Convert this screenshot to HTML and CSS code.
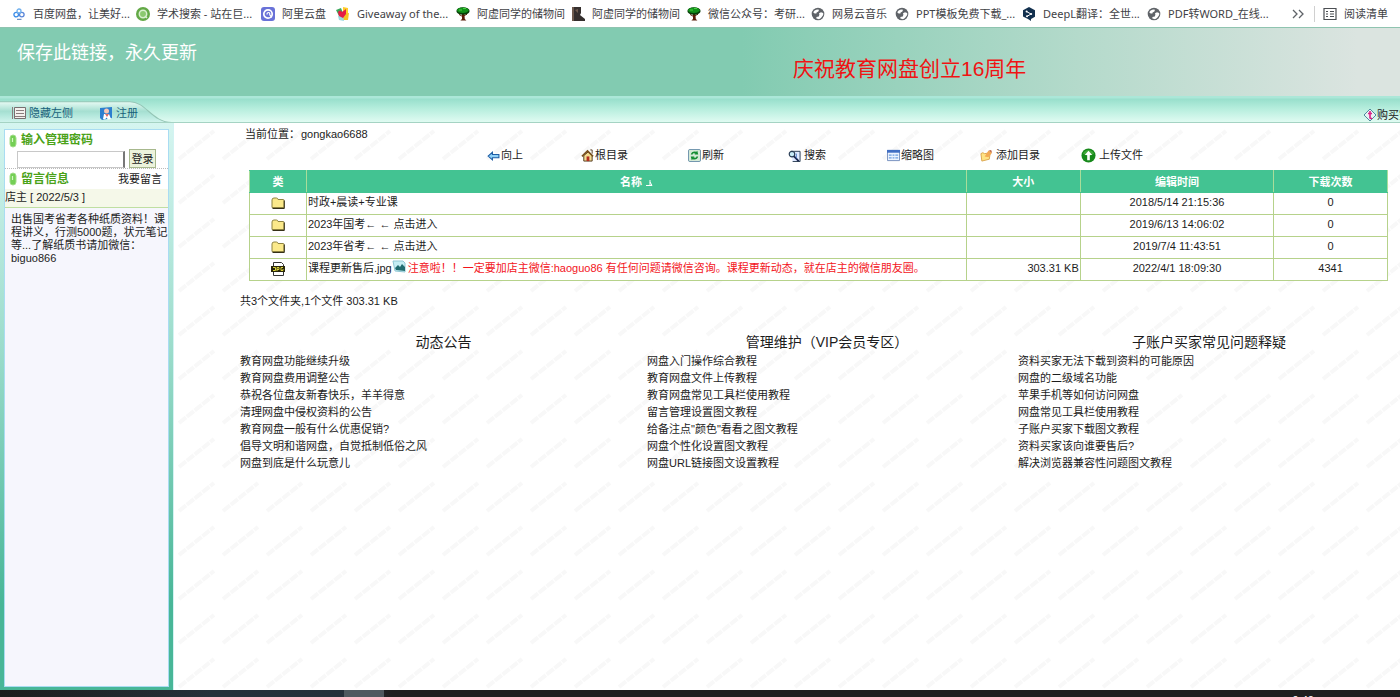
FILE: index.html
```html
<!DOCTYPE html>
<html lang="zh-CN">
<head>
<meta charset="utf-8">
<title>gongkao6688</title>
<link rel="stylesheet" href="styles.css">
</head>
<body>
<svg class="defs" aria-hidden="true">
  <symbol id="globe" viewBox="0 0 14 14"><circle cx="7" cy="7" r="6.3" fill="#5f6368"/><path d="M2.2 5.2 3.6 3.4 6 2.4 8 2.8 7.4 4.6 5.6 5.6 5.4 6.6H3.6zM8 6.2l2-1 2.2.8v2L10 11l-2 1.2-2.6-.6V10l2.4-.6.6-1.6z" fill="#fff"/></symbol>
  <symbol id="tree" viewBox="0 0 14 14"><path d="M6 7h2.4l.4 5 1.6 1.4H4.4L6 12z" fill="#5b1d08"/><path d="M3 7.4 6.4 9.4 11 7.2" stroke="#5b1d08" fill="none"/><ellipse cx="7" cy="4" rx="6.6" ry="3.8" fill="#073f08"/><ellipse cx="6.8" cy="3.2" rx="5.8" ry="2.8" fill="#12901a"/><path d="M3 3h3M7 1.5h3" stroke="#45d53f"/></symbol>
  <symbol id="folder" viewBox="0 0 14 12"><path d="M1 3q0-2 2-2h2.4q1.4 0 1.6 1.5h5.2q.8 0 .8.8v7.2H1z" fill="#fbe98a" stroke="#8e8340"/><path d="M13.3 3.5v8H1.5" fill="none" stroke="#353018"/></symbol>
  <symbol id="pill" viewBox="0 0 8 14"><rect x="1" y="1" width="6" height="12" rx="3" fill="#74cf55" stroke="#a2dd8a"/><path d="M3.5 4v4" stroke="#d5f7c4" stroke-width="1.2"/></symbol>
</svg>

<nav class="bookmarks" aria-label="书签栏">
  <div class="marks">
    <a href="#"><svg viewBox="0 0 14 14" fill="none"><circle cx="4.2" cy="7.6" r="2.3" stroke="#3a8ce8" stroke-width="1.3"/><circle cx="9.8" cy="7.6" r="2.3" stroke="#5a86d8" stroke-width="1.3"/><circle cx="7" cy="4" r="2" stroke="#6fb0ee" stroke-width="1.3"/><path d="M5 12.3h4.5" stroke="#4c77b8"/></svg>百度网盘，让美好...</a>
    <a href="#"><svg viewBox="0 0 14 14"><circle cx="7" cy="7" r="7" fill="#63a946"/><circle cx="7" cy="7" r="3.7" fill="#8bc96f" stroke="#d9f0cf" stroke-width="1.5"/><path d="m9 9 2 2" stroke="#d9f0cf" stroke-width="1.4"/></svg>学术搜索 - 站在巨...</a>
    <a href="#"><svg viewBox="0 0 14 14"><rect width="14" height="14" rx="3" fill="#6972d8"/><circle cx="7" cy="7" r="4.2" fill="none" stroke="#fff" stroke-width="1.7"/><path d="M6 7.5q0-2 1.5-2t1.3 2.4l2 2.5" fill="none" stroke="#fff" stroke-width="1.2"/></svg>阿里云盘</a>
    <a href="#"><svg viewBox="0 0 14 14"><path d="M0 3 5 1l2 5-4 3z" fill="#3ba75b"/><path d="m7 0 5 1v6H7z" fill="#ffcd28"/><path d="m7 7 6-1-1 7H6z" fill="#f6c224"/><path d="m2 9 5-1 1 6-5-1z" fill="#9ad8df"/><path d="M2 5q2-3 4 0l4-3 0 5-3 4-4-2z" fill="#e51b45"/></svg>Giveaway of the...</a>
    <a href="#"><svg><use href="#tree"/></svg>阿虚同学的储物间</a>
    <a href="#"><svg viewBox="0 0 14 14"><path d="M1 0h9v6l-1 2 5 4v2H1z" fill="#352f2e"/><path d="M1 0h2v14H1zM4 3l3-1v4z" fill="#6e5a4e"/></svg>阿虚同学的储物间</a>
    <a href="#"><svg><use href="#tree"/></svg>微信公众号：考研...</a>
    <a href="#"><svg><use href="#globe"/></svg>网易云音乐</a>
    <a href="#"><svg><use href="#globe"/></svg>PPT模板免费下载_...</a>
    <a href="#"><svg viewBox="0 0 14 14"><path d="m7 0 6 3.3v6.4L9 12v2l-3-2-5-2.6V3.3z" fill="#12304e"/><path d="M4.5 4.5 9 7 5 9.4" stroke="#fff" fill="none"/><circle cx="4.6" cy="4.6" r="1" fill="#fff"/><circle cx="9.2" cy="7" r="1" fill="#fff"/><circle cx="5" cy="9.3" r="1" fill="#fff"/></svg>DeepL翻译：全世...</a>
    <a href="#"><svg><use href="#globe"/></svg>PDF转WORD_在线...</a>
  </div>
  <button class="more" aria-label="更多书签"><svg viewBox="0 0 12 10" fill="none" stroke="#5f6368" stroke-width="1.3"><path d="m1 1 4 4-4 4M7 1l4 4-4 4"/></svg></button>
  <button class="reading"><svg viewBox="0 0 14 14" fill="none" stroke="#4b4f53" stroke-width="1.2"><path d="M1 1.5h12v11H1zM3 4.5h2M3 7h2M3 9.5h2M7 4.5h4M7 7h4M7 9.5h4"/></svg>阅读清单</button>
</nav>

<header class="banner">
  <h1>保存此链接，永久更新</h1>
  <p>庆祝教育网盘创立16周年</p>
</header>

<div class="strip">
  <svg class="tab" viewBox="0 0 176 26" preserveAspectRatio="none">
    <defs><linearGradient id="tabfill" x2="0" y2="1"><stop offset="0" stop-color="#e7faf4"/><stop offset=".45" stop-color="#a5dfd1"/><stop offset=".6" stop-color="#b0e6da"/><stop offset="1" stop-color="#d3f5ee"/></linearGradient></defs>
    <path d="M0 5.5H130C146 5.5 152 25.5 172 25.5V26H0z" fill="url(#tabfill)"/>
    <path d="M0 5.5H130C146 5.5 152 25.5 172 25.5" fill="none" stroke="#93c5b5"/>
  </svg>
  <a href="#"><svg viewBox="0 0 14 14"><path d="M2.5 1.5h11v11h-11z" fill="#f3f1ee" stroke="#786f70"/><path d="M.5 1v12M4 4.5h8M4 7.5h8M3 10.5h10" stroke="#8a7d7d"/></svg>隐藏左侧</a>
  <a href="#"><svg viewBox="0 0 14 14"><path d="M1 2 13 1v11L3 14 1 12z" fill="#2c7fcf"/><circle cx="7.5" cy="5" r="2.5" fill="#f5c6b5"/><path d="m4 13 1-5h5l2 5-3 .5-1.5-2-1.5 2z" fill="#fff"/><path d="m6 8 2 3 2-3" fill="#dc6b63"/></svg>注册</a>
  <a class="buy" href="#"><svg viewBox="0 0 12 12"><path d="m6 0 6 6-6 6-6-6z" fill="#e9f3f4" stroke="#4f8a9d"/><path d="M6 2v7q1 1 2 0M4 4.5h4" fill="none" stroke="#d82186" stroke-width="1.6"/></svg>购买空间</a>
</div>

<div class="body">
  <aside class="side">
    <div class="panel">
      <form class="login">
        <label for="pw"><svg><use href="#pill"/></svg>输入管理密码</label>
        <div class="entry"><input id="pw" type="password"><button type="button">登录</button></div>
      </form>
      <div class="msghead"><h2><svg><use href="#pill"/></svg>留言信息</h2><a href="#">我要留言</a></div>
      <p class="owner">店主 [ 2022/5/3 ]</p>
      <p class="note">出售国考省考各种纸质资料！课<br>程讲义，行测5000题，状元笔记<br>等...了解纸质书请加微信：<br>biguo866</p>
    </div>
  </aside>

  <main>
    <p class="location">当前位置：<span>gongkao6688</span></p>
    <nav class="tools">
      <a href="#"><svg viewBox="0 0 12 12"><path d="M1 6.5 5 3v2h6v3H5v2z" fill="#8ed0f8" stroke="#1c5ba3"/></svg>向上</a>
      <a href="#"><svg viewBox="0 0 14 14"><path d="M3 7v6h9V7L8 3z" fill="#f4dc91" stroke="#4f3518"/><path d="m1 8 6-6 6 6" fill="none" stroke="#78501e" stroke-width="1.7"/><path d="M6 8h3v5H6z" fill="#b52d20"/><path d="M10 1h2v4" fill="none" stroke="#4f3518"/></svg>根目录</a>
      <a href="#"><svg viewBox="0 0 14 14"><rect x=".5" y=".5" width="13" height="13" rx="1.5" fill="#d5ead7" stroke="#668da7"/><path d="M3 6q1-4 6-3l1-1 1 4H7l1-1Q5 4 5 6zM11 8q-1 4-6 3l-1 1-1-4h4L6 9q3 1 3-1z" fill="#138d31"/></svg>刷新</a>
      <a class="loose" href="#"><svg viewBox="0 0 14 14"><path d="M3 2.5h10v11H5" fill="#dfe9ff" stroke="#24374d"/><circle cx="4.3" cy="5.5" r="3" fill="#c9edf9" stroke="#283a53" stroke-width="1.2"/><path d="m6.5 8 5 5" stroke="#17234b" stroke-width="2"/><path d="M9 5v5" stroke="#4d7eca"/></svg>搜索</a>
      <a href="#"><svg viewBox="0 0 14 12"><path d="M.5.5h13v11H.5z" fill="#edf4ff" stroke="#718dbc"/><path d="M0 0h14v3H0z" fill="#416fc4"/><path d="M2 5.5h3M2 8.5h3M6 5.5h2M6 8.5h2M9 5.5h3M9 8.5h3" stroke="#6d9ee0" stroke-width="1.3"/></svg>缩略图</a>
      <a class="loose" href="#"><svg viewBox="0 0 14 14"><path d="M1 5q2-2 4 0l6-1-1 7-8 2z" fill="#ffe384" stroke="#d9a34b"/><path d="m5 8 4-6 4 2-4 5z" fill="#f3aa54"/><path d="m9 2 3-1 1 3z" fill="#b96140"/></svg>添加目录</a>
      <a class="loose upload" href="#"><svg viewBox="0 0 16 16"><circle cx="8" cy="8" r="7.5" fill="#17891b"/><path d="M2 6q2-4 6-4t6 4l-6 3z" fill="#5abb4d" opacity=".6"/><path d="m8 3 4 4.5H9.4V13H6.6V7.5H4z" fill="#fff"/></svg>上传文件</a>
    </nav>

    <table class="files">
      <colgroup><col class="c-type"><col class="c-name"><col class="c-size"><col class="c-time"><col class="c-hits"></colgroup>
      <thead><tr><th>类</th><th>名称 <svg class="sort" viewBox="0 0 8 8"><path d="M5 1v6M1 6.5h6L5 3" fill="none" stroke="#fff"/></svg></th><th>大小</th><th>编辑时间</th><th>下载次数</th></tr></thead>
      <tbody>
        <tr><td><svg class="type"><use href="#folder"/></svg></td><td><a href="#">时政+晨读+专业课</a></td><td></td><td>2018/5/14 21:15:36</td><td>0</td></tr>
        <tr><td><svg class="type"><use href="#folder"/></svg></td><td><a href="#">2023年国考← ← 点击进入</a></td><td></td><td>2019/6/13 14:06:02</td><td>0</td></tr>
        <tr><td><svg class="type"><use href="#folder"/></svg></td><td><a href="#">2023年省考← ← 点击进入</a></td><td></td><td>2019/7/4 11:43:51</td><td>0</td></tr>
        <tr><td><svg class="type" viewBox="0 0 14 14"><path d="M2.5.5h8l2 2v11h-10z" fill="#fff" stroke="#333"/><path d="M0 4h14v6H0z" fill="#29260a"/><path d="M2 5.5h2.5v3H2M6 9V5.5h2v2H6M12 5.5h-2v3h2V7" fill="none" stroke="#d9d33b"/></svg></td><td><a href="#">课程更新售后.jpg</a><svg class="thumb" viewBox="0 0 14 14"><path d="M1 1h10l2 2v9L3 11z" fill="#c5eef4" stroke="#90c7d4"/><path d="m3 8 3-3 2 2 2-3 3 3v4L4 10z" fill="#206c70"/></svg><span class="remark">注意啦！！一定要加店主微信:haoguo86 有任何问题请微信咨询。课程更新动态，就在店主的微信朋友圈。</span></td><td class="size">303.31 KB</td><td>2022/4/1 18:09:30</td><td>4341</td></tr>
      </tbody>
    </table>
    <p class="total">共3个文件夹,1个文件 303.31 KB</p>

    <div class="news">
      <section><h2>动态公告</h2><ul>
        <li><a href="#">教育网盘功能继续升级</a></li><li><a href="#">教育网盘费用调整公告</a></li><li><a href="#">恭祝各位盘友新春快乐，羊羊得意</a></li><li><a href="#">清理网盘中侵权资料的公告</a></li><li><a href="#">教育网盘一般有什么优惠促销?</a></li><li><a href="#">倡导文明和谐网盘，自觉抵制低俗之风</a></li><li><a href="#">网盘到底是什么玩意儿</a></li></ul></section>
      <section class="vip"><h2>管理维护（VIP会员专区）</h2><ul>
        <li><a href="#">网盘入门操作综合教程</a></li><li><a href="#">教育网盘文件上传教程</a></li><li><a href="#">教育网盘常见工具栏使用教程</a></li><li><a href="#">留言管理设置图文教程</a></li><li><a href="#">给备注点"颜色"看看之图文教程</a></li><li><a href="#">网盘个性化设置图文教程</a></li><li><a href="#">网盘URL链接图文设置教程</a></li></ul></section>
      <section><h2>子账户买家常见问题释疑</h2><ul>
        <li><a href="#">资料买家无法下载到资料的可能原因</a></li><li><a href="#">网盘的二级域名功能</a></li><li><a href="#">苹果手机等如何访问网盘</a></li><li><a href="#">网盘常见工具栏使用教程</a></li><li><a href="#">子账户买家下载图文教程</a></li><li><a href="#">资料买家该向谁要售后?</a></li><li><a href="#">解决浏览器兼容性问题图文教程</a></li></ul></section>
    </div>
  </main>
</div>

<footer class="taskbar"><span class="active"></span><time>9:40</time></footer>
</body>
</html>
```
FILE: styles.css
```css
* { box-sizing: border-box; }
body {
  margin: 0;
  height: 100vh;
  display: flex;
  flex-direction: column;
  overflow: hidden;
  background: #fff;
  color: #1c1c1c;
  font: 11px/16px "Liberation Sans", "Noto Sans CJK SC", sans-serif;
}
h1, h2, p, ul { margin: 0; padding: 0; font-weight: 400; }
ul { list-style: none; }
a { color: inherit; text-decoration: none; }
button { font: inherit; color: inherit; }
svg { flex: none; display: block; }
.defs { position: absolute; width: 0; height: 0; }

.bookmarks {
  flex: none;
  height: 27px;
  display: flex;
  align-items: center;
  padding: 0 12px;
  color: #3f4246;
  font-family: "Noto Sans", "Noto Sans CJK SC", sans-serif;
  white-space: nowrap;
}
.marks {
  flex: 1;
  display: grid;
  grid-template-columns: 124px 125px 75px 120px 115px 116px 124px 84px 127px 125px 1fr;
}
.marks a, .reading { display: flex; align-items: center; gap: 7px; }
.marks svg { width: 14px; height: 14px; }
.more, .reading { border: 0; background: none; padding: 0; }
.more { padding-right: 10px; }
.more svg { width: 12px; height: 10px; }
.reading { border-left: 1px solid #d0d0d0; padding-left: 8px; }
.reading svg { width: 14px; height: 14px; }

.banner {
  flex: none;
  height: 69px;
  display: grid;
  grid-template-columns: 793px 1fr;
  background: linear-gradient(90deg, #82cbb1 53%, #b4dacb 77%, #dbe4e0 97%);
  border-top: 1px solid #8fc4b0;
}
.banner h1 { padding: 12px 0 0 17px; font-size: 18px; line-height: 26px; color: #fff; }
.banner p { padding-top: 26px; font-size: 21px; line-height: 30px; color: #f01414; }

.strip {
  flex: none;
  position: relative;
  height: 27px;
  display: flex;
  align-items: flex-start;
  gap: 26px;
  padding: 9px 0 0 12px;
  overflow: hidden;
  white-space: nowrap;
  color: #17607a;
  border-bottom: 1px solid #a5d3c3;
  background: linear-gradient(#abe7d8 2px, #98dfcc 3px, #b4eddc 12px, #e0fbf2);
}
.strip a { position: relative; display: flex; align-items: center; gap: 3px; }
.strip a svg { width: 14px; height: 14px; }
.strip .tab { position: absolute; left: 0; top: 0; width: 176px; height: 27px; }
.strip .buy { margin-left: auto; width: 36px; gap: 1px; padding-top: 2px; color: #222; }
.strip .buy svg { width: 12px; height: 12px; }

.body { flex: 1; min-height: 0; display: flex; }
.side {
  flex: none;
  width: 174px;
  padding: 6px 4px 3px;
  border-right: 1px solid #d3f3f3;
  background: linear-gradient(#d5f5f0, #9bdccb 40%, #48b697 85%);
}
.panel { height: 100%; background: #f6f6fd; border: 1px solid #a9dcf2; }
.login { height: 39px; background: #fff; border-bottom: 1px dotted #bbb; }
.login label, .msghead h2 { display: flex; align-items: center; gap: 4px; padding: 2px 0 0 4px; font-size: 12px; font-weight: 700; color: #4aa218; line-height: 17px; }
.login label svg, .msghead h2 svg { width: 8px; height: 14px; }
.entry { display: flex; align-items: flex-start; gap: 4px; padding-left: 12px; }
.entry input { width: 108px; height: 17px; margin-top: 2px; border: 1px solid #c8c8c8; border-right: 2px solid #777; background: #fff; }
.entry button { width: 27px; height: 19px; padding: 0; border: 1px solid #a7b88d; background: #ecf3dc; white-space: nowrap; }
.msghead { height: 20px; display: flex; align-items: center; justify-content: space-between; background: #fff; padding-right: 6px; }
.msghead h2 { padding-top: 0; }
.owner { height: 19px; line-height: 16px; background: #f5f8e9; border-bottom: 1px solid #bfdfa2; }
.note { padding: 5px 0 0 6px; line-height: 13px; white-space: nowrap; }

main {
  flex: 1;
  min-width: 0;
  padding: 3px 12px 0 66px;
  background-image: url("data:image/svg+xml,%3Csvg xmlns='http://www.w3.org/2000/svg' width='44' height='44'%3E%3Cpath d='M5 36L40 8' stroke='%23f8f8f8' stroke-width='4' stroke-dasharray='9 1'/%3E%3C/svg%3E");
}
.location { padding-left: 5px; }
.location span { padding-left: 1px; }
.tools {
  height: 18px;
  margin: 4px 0 6px;
  display: grid;
  grid-template-columns: 94px 107px 100px 99px 93px 101px 60px;
  justify-content: center;
  white-space: nowrap;
}
.tools a { display: flex; align-items: center; gap: 1px; }
.tools svg { width: 13px; height: 13px; }
.tools .loose { gap: 3px; }
.tools .upload svg { width: 15px; height: 15px; }

.files { width: calc(100% - 9px); margin-left: 9px; border-collapse: collapse; table-layout: fixed; background: #fff; }
.c-type, .c-size, .c-hits { width: 10%; }
.c-type { width: 5%; }
.c-time { width: 17%; }
.files th, .files td { height: 22px; padding: 0 1px; border: 1px solid #b6d28b; text-align: center; line-height: 18px; white-space: nowrap; }
.files th { background: #43c392; color: #fff; border-color: #43c392 #a9dd9a; }
.files td { vertical-align: top; }
.files td:nth-child(2) { text-align: left; }
.files td.size { text-align: right; }
.files svg { display: inline-block; vertical-align: middle; }
.type { width: 14px; height: 14px; }
.sort { width: 8px; height: 8px; }
.files .thumb { width: 14px; height: 14px; margin: 0 2px 0 0; vertical-align: text-bottom; }
.remark { color: #f3141c; }
.total { margin-top: 12px; }

.news { margin: 24px -12px 0 0; display: grid; grid-template-columns: 407fr 371fr 382fr; }
.news h2 { font-size: 14px; line-height: 18px; text-align: center; margin-bottom: 2px; }
.news li { line-height: 17px; }
.news .vip { padding-right: 11px; }

.taskbar { flex: none; height: 7px; display: flex; overflow: hidden; background: linear-gradient(90deg, #1c1c1c, #25313a 15%, #25303a 25%, #1f1f1f 28%); }
.active { width: 40px; margin-left: 344px; background: #4f595f; }
.taskbar time { margin: 2px 86px 0 auto; color: #fff; }
```
